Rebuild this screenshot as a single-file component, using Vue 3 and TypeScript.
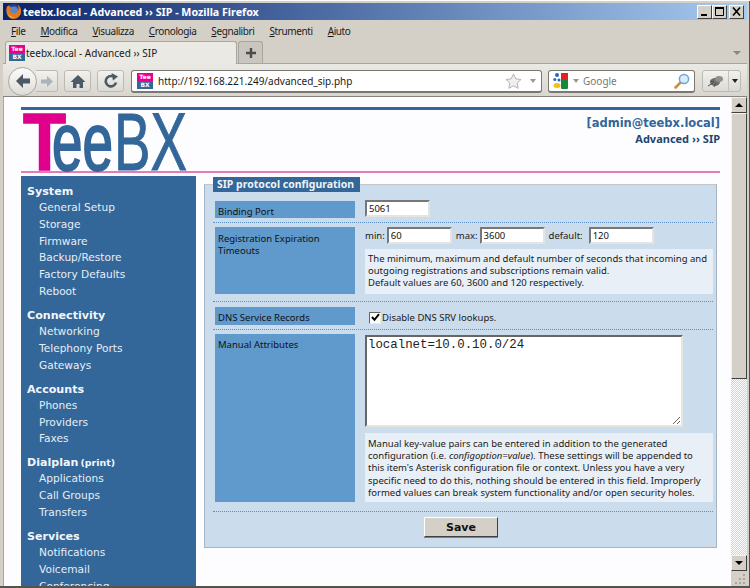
<template>
  <div class="window">
    <div class="titlebar">
      <svg class="ff" width="17" height="17" viewBox="0 0 17 17">
        <circle cx="8.5" cy="8.5" r="7.5" fill="#27408f" />
        <circle cx="9" cy="7.5" r="4" fill="#5a86c8" />
        <path d="M2 3 C1 7 1 13 6 15.5 C10 17 15 14.5 16 9.5 C16.5 6 15 3 12.5 1.5 C14 4 14 6.5 12.5 8.5 C11.5 10.5 8 11.5 6 9.5 C4.5 8 5 6 6.5 5 C5.5 4 4.5 3.5 4 2 C3.5 2.5 3 3 3 3.5 Z" fill="#e8781c" />
        <path d="M3 11 C4 14 7 15.5 10 15 C7.5 14.5 5 13 3 11 Z" fill="#f9c52e" />
      </svg>
      <span class="title-text">teebx.local - Advanced ›› SIP - Mozilla Firefox</span>
      <div class="win-btns">
        <button class="win-btn">
          <svg width="10" height="9" viewBox="0 0 10 9"><rect x="1" y="7" width="6" height="2" fill="#000" /></svg>
        </button>
        <button class="win-btn">
          <svg width="10" height="9" viewBox="0 0 10 9"><path d="M0.5 1.5h8v7h-8z" fill="none" stroke="#000" /><rect x="0" y="0" width="9" height="2" fill="#000" /></svg>
        </button>
        <button class="win-btn close">
          <svg width="10" height="9" viewBox="0 0 10 9"><path d="M1 0.5L8 8.5M8 0.5L1 8.5" stroke="#000" stroke-width="1.6" /></svg>
        </button>
      </div>
    </div>

    <div class="menubar">
      <span v-for="m in menus" :key="m.rest" class="menu-item"><u>{{ m.key }}</u>{{ m.rest }}</span>
    </div>

    <div class="tabstrip">
      <div class="tab">
        <span class="favicon"><b>Tee</b><b>BX</b></span>
        <span class="tab-label">teebx.local - Advanced ›› SIP</span>
      </div>
      <div class="newtab">
        <svg width="14" height="14" viewBox="0 0 14 14"><path d="M7 2v10M2 7h10" stroke="#4c4c4c" stroke-width="2.4" /></svg>
      </div>
      <span class="tab-arrow"></span>
    </div>

    <div class="navbar">
      <div class="back">
        <svg width="18" height="16" viewBox="0 0 18 16"><path d="M9 1L2 8l7 7v-4.5h7v-5H9z" fill="#4c5a68" /></svg>
      </div>
      <div class="forward">
        <svg width="14" height="13" viewBox="0 0 14 13"><path d="M7 1l6 5.500-6 5.500V8.500H1v-4h6z" fill="#a9b4bd" /></svg>
      </div>
      <div class="navbtn home">
        <svg width="16" height="15" viewBox="0 0 16 15"><path d="M8 1L0.500 8h2.500v6h3.500v-4h3v4H13V8h2.500z" fill="#4c5a68" /></svg>
      </div>
      <div class="navbtn reload">
        <svg width="16" height="16" viewBox="0 0 16 16"><path d="M13 9.500A5.200 5.200 0 1 1 10 3.400" fill="none" stroke="#4c5a68" stroke-width="2.600" /><path d="M8.500 0l6.500 3.500-5 4z" fill="#4c5a68" /></svg>
      </div>
      <div class="urlbar">
        <span class="favicon url-fav"><b>Tee</b><b>BX</b></span>
        <span class="url-text">http://192.168.221.249/advanced_sip.php</span>
        <svg width="17" height="16" viewBox="0 0 17 16"><path d="M8.500 1l2.300 4.800 5.200.7-3.800 3.600.9 5.200-4.600-2.500-4.600 2.500.9-5.200L1 6.500l5.200-.7z" fill="#f0efec" stroke="#b3b3b0" /></svg>
        <span class="drop url-drop"></span>
      </div>
      <div class="search">
        <svg width="16" height="16" viewBox="0 0 16 16">
          <rect x="8" y="0" width="7" height="7" fill="#e0231c" />
          <rect x="8" y="6" width="7" height="10" rx="1" fill="#178a3a" />
          <circle cx="4" cy="2" r="2" fill="#2a62c4" />
          <circle cx="1.800" cy="6.500" r="1.500" fill="#2a62c4" />
          <circle cx="6" cy="7" r="1.500" fill="#2a62c4" />
          <ellipse cx="4" cy="12.500" rx="3.500" ry="2.500" fill="#f4c20d" />
        </svg>
        <span class="drop search-drop"></span>
        <span class="search-text">Google</span>
        <svg width="16" height="16" viewBox="0 0 16 16"><path d="M7 9L1.500 14.500" stroke="#d98a35" stroke-width="2.600" stroke-linecap="round" /><circle cx="10" cy="6" r="4.600" fill="#d8ecfa" stroke="#6ea6d8" stroke-width="1.500" /></svg>
      </div>
      <div class="addon">
        <span class="addon-main">
          <svg width="17" height="13" viewBox="0 0 17 13"><ellipse cx="8" cy="7" rx="5" ry="4" fill="#6d6d6d" /><ellipse cx="12" cy="4" rx="4" ry="3" fill="#8f8f8f" /><path d="M1 11l5-3M7 12l2-4M3 6l4 1" stroke="#4f4f4f" /></svg>
        </span>
        <span class="addon-drop"><span class="drop dark"></span></span>
      </div>
    </div>

    <div class="body">
      <div class="page">
        <header class="head">
          <svg class="logo" width="170" height="62" viewBox="0 0 170 62">
            <text x="2" y="60" class="logo-t" textLength="43" lengthAdjust="spacingAndGlyphs">T</text>
            <text x="31" y="60" class="logo-b logo-e" textLength="61" lengthAdjust="spacingAndGlyphs">ee</text>
            <text x="93" y="60" class="logo-b" textLength="73" lengthAdjust="spacingAndGlyphs">BX</text>
          </svg>
          <div class="whoami">
            <div class="user">[admin@teebx.local]</div>
            <div class="crumb">Advanced ›› SIP</div>
          </div>
        </header>

        <div class="main">
          <nav class="sidebar">
            <section v-for="g in nav" :key="g.title" class="group">
              <h3>{{ g.title }}<small v-if="g.note">{{ g.note }}</small></h3>
              <a v-for="item in g.items" :key="item">{{ item }}</a>
            </section>
          </nav>

          <div class="content">
            <fieldset class="panel">
              <legend>SIP protocol configuration</legend>

              <div class="row row-port">
                <div class="lbl lbl-low">Binding Port</div>
                <div class="ctl"><input class="num" value="5061" readonly /></div>
              </div>

              <div class="row row-reg">
                <div class="lbl">Registration Expiration Timeouts</div>
                <div class="ctl">
                  <div class="timeouts">
                    <span>min:</span><input class="num" value="60" readonly />
                    <span>max:</span><input class="num" value="3600" readonly />
                    <span>default:</span><input class="num" value="120" readonly />
                  </div>
                  <p class="help">The minimum, maximum and default number of seconds that incoming and outgoing registrations and subscriptions remain valid.<br />Default values are 60, 3600 and 120 respectively.</p>
                </div>
              </div>

              <div class="row row-dns">
                <div class="lbl lbl-low">DNS Service Records</div>
                <div class="ctl check-line">
                  <span class="check">
                    <svg width="9" height="9" viewBox="0 0 9 9"><path d="M1 4l2.500 2.800L8 1.200" fill="none" stroke="#000" stroke-width="2" /></svg>
                  </span>
                  <span>Disable DNS SRV lookups.</span>
                </div>
              </div>

              <div class="row row-manual">
                <div class="lbl">Manual Attributes</div>
                <div class="ctl">
                  <textarea class="attrs" readonly>localnet=10.0.10.0/24</textarea>
                  <p class="help">Manual key-value pairs can be entered in addition to the generated configuration (i.e. <i>configoption=value</i>). These settings will be appended to this item's Asterisk configuration file or context. Unless you have a very specific need to do this, nothing should be entered in this field. Improperly formed values can break system functionality and/or open security holes.</p>
                </div>
              </div>

              <div class="actions">
                <button class="save">Save</button>
              </div>
            </fieldset>
          </div>
        </div>
      </div>

      <div class="scrollbar">
        <div class="sb-btn"><span class="tri up"></span></div>
        <div class="sb-thumb"></div>
        <div class="sb-track"></div>
        <div class="sb-btn"><span class="tri down"></span></div>
        <div class="sb-grip">
          <svg width="13" height="11" viewBox="0 0 13 11"><path d="M9 1h2v2H9zM5 5h2v2H5zM9 5h2v2H9zM1 9h2v2H1zM5 9h2v2H5zM9 9h2v2H9z" fill="#aaa69c" /></svg>
        </div>
      </div>
    </div>
  </div>
</template>

<script setup lang="ts">
const menus = [
  { key: 'F', rest: 'ile' },
  { key: 'M', rest: 'odifica' },
  { key: 'V', rest: 'isualizza' },
  { key: 'C', rest: 'ronologia' },
  { key: 'S', rest: 'egnalibri' },
  { key: 'S', rest: 'trumenti' },
  { key: 'A', rest: 'iuto' },
];

const nav: { title: string; note?: string; items: string[] }[] = [
  { title: 'System', items: ['General Setup', 'Storage', 'Firmware', 'Backup/Restore', 'Factory Defaults', 'Reboot'] },
  { title: 'Connectivity', items: ['Networking', 'Telephony Ports', 'Gateways'] },
  { title: 'Accounts', items: ['Phones', 'Providers', 'Faxes'] },
  { title: 'Dialplan', note: '(print)', items: ['Applications', 'Call Groups', 'Transfers'] },
  { title: 'Services', items: ['Notifications', 'Voicemail', 'Conferencing'] },
];
</script>

<style>
html, body { margin: 0; overflow: hidden; }
</style>

<style scoped>
* { box-sizing: border-box; }
.window {
  width: 750px;
  height: 588px;
  display: flex;
  flex-direction: column;
  overflow: hidden;
  background: #d4d0c8;
  padding: 3px 3px 0;
  font-family: "Noto Sans", sans-serif;
  color: #1a1a1a;
  border-top: 1px solid #fff;
  box-shadow: inset -1px 0 0 #55534e, inset 0 -2px 0 #55534e;
}
.titlebar {
  height: 17px;
  margin-top: -1px;
  display: flex;
  align-items: center;
  padding: 0 0 0 2px;
  background: linear-gradient(90deg, #0a246a, #a6caf0);
  color: #fff;
  font-size: 10.700px;
  font-weight: bold;
}
.ff { margin-right: 1px; flex: none; }
.title-text { flex: 1; }
.win-btns { display: flex; margin-right: 3px; }
.win-btn {
  width: 15px;
  height: 14px;
  padding: 0;
  background: #d4d0c8;
  border: 1px solid;
  border-color: #fff #404040 #404040 #fff;
  display: flex;
  align-items: center;
  justify-content: center;
}
.win-btn.close { margin-left: 2px; }

.menubar {
  height: 21px;
  display: flex;
  align-items: center;
  font-size: 10px;
  letter-spacing: -0.4px;
  padding-left: 8px;
  gap: 15px;
}

.tabstrip {
  height: 23px;
  display: flex;
  align-items: flex-end;
  padding-left: 2px;
  position: relative;
  border-bottom: 1px solid #a9a69f;
}
.tab {
  width: 232px;
  height: 23px;
  display: flex;
  align-items: center;
  gap: 1px;
  padding-left: 3px;
  background: #ebe9e4;
  border: 1px solid #a9a69f;
  border-bottom: none;
  border-radius: 3px 3px 0 0;
  margin-bottom: -1px;
  font-size: 10px;
}
.favicon {
  width: 16px;
  height: 16px;
  display: flex;
  flex-direction: column;
  flex: none;
  font-family: "DejaVu Sans", sans-serif;
  font-size: 6px;
  line-height: 8px;
  text-align: center;
  color: #fff;
}
.favicon b { display: block; height: 8px; background: #e6008c; }
.favicon b + b { background: #336699; }
.newtab {
  width: 25px;
  height: 22px;
  margin-left: 1px;
  background: #c9c6bf;
  border: 1px solid #a9a69f;
  border-bottom: none;
  border-radius: 3px 3px 0 0;
  display: flex;
  align-items: center;
  justify-content: center;
}
.tab-arrow {
  position: absolute;
  right: 6px;
  top: 10px;
  border: 4px solid transparent;
  border-top: 4px solid #8a8780;
  border-bottom: none;
}

.navbar {
  height: 33px;
  display: flex;
  align-items: center;
  padding: 2px 0 0 5px;
  background: linear-gradient(#ebe9e4, #d9d6cf);
  border-bottom: 1px solid #85837d;
}
.back {
  width: 29px;
  height: 29px;
  flex: none;
  border-radius: 50%;
  background: linear-gradient(#fcfcfb, #dedcd6);
  border: 1px solid #a9a69f;
  display: flex;
  align-items: center;
  justify-content: center;
  position: relative;
  z-index: 1;
}
.forward, .navbtn {
  height: 22px;
  flex: none;
  display: flex;
  align-items: center;
  justify-content: center;
  background: linear-gradient(#f2f1ed, #dcdad4);
  border: 1px solid #bdbab3;
  border-radius: 3px;
}
.forward { width: 22px; margin-left: -1px; border-left: none; border-radius: 0 3px 3px 0; }
.home { width: 27px; margin-left: 6px; }
.reload { width: 27px; margin-left: 6px; }
.urlbar, .search {
  height: 23px;
  flex: none;
  display: flex;
  align-items: center;
  background: #fff;
  border: 1px solid #7a7873;
  border-bottom-width: 2px;
  border-radius: 3px;
}
.urlbar { width: 411px; margin-left: 7px; padding: 0 5px 0 5px; }
.url-fav { margin-right: 5px; }
.url-text { flex: 1; font-size: 10px; }
.drop {
  display: inline-block;
  border: 3.500px solid transparent;
  border-top: 4px solid #9a9892;
  border-bottom: none;
}
.drop.dark { border-top-color: #222; }
.url-drop { margin-left: 8px; }
.search { width: 147px; margin-left: 6px; padding: 0 4px 0 4px; }
.search-drop { margin-left: 4px; }
.search-text { flex: 1; margin-left: 4px; font-size: 10px; color: #777; }
.addon {
  width: 39px;
  height: 22px;
  margin-left: 7px;
  display: flex;
  background: linear-gradient(#f2f1ed, #dcdad4);
  border: 1px solid #bdbab3;
  border-radius: 3px;
}
.addon-main {
  flex: 1;
  display: flex;
  align-items: center;
  justify-content: center;
  border-right: 1px solid #c5c2bb;
}
.addon-drop { width: 11px; display: flex; align-items: center; justify-content: center; }

.body { flex: 1; min-height: 0; display: flex; margin-bottom: 2px; border-left: 1px solid #a9a69f; }
.page {
  width: 727px;
  flex: none;
  background: #fdfdff;
  padding: 10px 11px 0 17px;
  overflow: hidden;
}
.head {
  height: 66px;
  display: flex;
  justify-content: space-between;
  border-top: 3px solid #336699;
  border-bottom: 2px solid #e67ac0;
}
.logo-t {
  font-family: "Liberation Sans", sans-serif;
  font-weight: bold;
  font-size: 82px;
  fill: #e0008c;
  stroke: #e0008c;
  stroke-width: 1.5px;
}
.logo-b {
  font-family: "Liberation Sans", sans-serif;
  font-size: 82px;
  fill: #336699;
  stroke: #336699;
  stroke-width: 1px;
}
.logo-e { stroke-width: 2px; }
.whoami {
  text-align: right;
  font-weight: bold;
  padding-top: 5px;
  line-height: 16px;
}
.user { color: #336699; font-family: "DejaVu Sans", sans-serif; font-size: 11.500px; }
.crumb { color: #23466f; font-size: 11px; }

.main { display: flex; gap: 8px; margin-top: 3px; align-items: flex-start; }
.sidebar {
  width: 175px;
  flex: none;
  height: 420px;
  padding: 8px 6px 0;
  background: #336699;
  color: #e6eef6;
  font-family: "DejaVu Sans", sans-serif;
}
.group { margin-bottom: 8.300px; }
.group h3 {
  margin: 0;
  height: 15px;
  line-height: 16px;
  font-size: 11.100px;
  font-weight: bold;
  color: #f2f6fa;
}
.group small { font-size: 9.500px; margin-left: 2px; }
.group a {
  display: block;
  height: 16.800px;
  line-height: 16.800px;
  padding-left: 12px;
  font-size: 10.600px;
}
.content { width: 513px; flex: none; padding-top: 1px; }
.panel {
  margin: 0;
  padding: 0 3px 11px 8px;
  min-width: 0;
  height: 371px;
  background: #cbdcec;
  border: 1px solid #a4b4c4;
  border-top-color: #c0c6cc;
  font-size: 9.500px;
}
.panel legend {
  margin-left: 0;
  padding: 0 0 0 4px;
  height: 15px;
  width: 147px;
  line-height: 15px;
  white-space: nowrap;
  background: #336699;
  color: #eef3f8;
  font-size: 10.500px;
  font-weight: bold;
}
.row {
  display: flex;
  gap: 10px;
  padding: 4px 0 4px 2px;
  border-bottom: 1px dotted #5b8fc4;
}
.row-port { height: 26px; margin-top: 5px; }
.row-reg { height: 79px; padding-bottom: 7px; }
.row-dns { height: 28px; padding-top: 5px; }
.row-manual { height: 182px; padding-bottom: 9px; }
.lbl {
  width: 140px;
  flex: none;
  padding: 6px 3px 0;
  background: #6099cc;
  color: #111;
  line-height: 12px;
}
.row-manual .lbl { padding-top: 5px; }
.lbl-low { padding-top: 5px; }
.ctl { flex: 1; min-width: 0; }
.num {
  width: 65px;
  height: 17px;
  padding: 0 2px;
  margin: 0 4px 0 2px;
  background: #fff;
  border: 2px solid;
  border-color: #777 #e6e4df #e6e4df #777;
  font-family: "Noto Sans", sans-serif;
  font-size: 9.500px;
  color: #111;
  outline: none;
}
.row-port .num { display: block; margin: -1px 0 0; }
.timeouts { display: flex; align-items: center; height: 17px; }
.timeouts span:last-of-type { margin-right: 4px; }
.help {
  margin: 5px 0 0;
  padding: 4px 3px 0;
  background: #e8eff6;
  line-height: 12.200px;
  font-size: 9.500px;
}
.row-reg .help { height: 45px; }
.row-manual .help { height: 69px; margin-top: 6px; padding-top: 5px; }
.check-line { display: flex; align-items: center; gap: 1px; padding: 3px 0 0 4px; }
.check {
  width: 12px;
  height: 12px;
  flex: none;
  display: flex;
  align-items: center;
  justify-content: center;
  background: #fff;
  border: 1px solid;
  border-color: #666 #eee #eee #666;
}
.attrs {
  display: block;
  width: 318px;
  height: 92px;
  margin-top: 1px;
  padding: 1px;
  background: #fff;
  border: 2px solid;
  border-color: #666 #e6e4df #e6e4df #666;
  font-family: "Liberation Mono", monospace;
  font-size: 12.400px;
  color: #222;
  outline: none;
}
.actions { display: flex; justify-content: center; padding: 5px 4px 0 0; }
.save {
  width: 74px;
  height: 20px;
  padding: 0;
  background: #d4d0c8;
  border: 1px solid;
  border-color: #fff #404040 #404040 #fff;
  box-shadow: 0 1px 0 #808080;
  font-family: "DejaVu Sans", sans-serif;
  font-size: 11px;
  font-weight: bold;
  color: #111;
}

.scrollbar { width: 16px; flex: none; display: flex; flex-direction: column; }
.sb-btn {
  height: 16px;
  flex: none;
  background: #d4d0c8;
  border: 1px solid;
  border-color: #f4f3ef #404040 #404040 #f4f3ef;
  display: flex;
  align-items: center;
  justify-content: center;
}
.tri { border: 4px solid transparent; }
.tri.up { border-bottom: 4px solid #000; border-top: none; }
.tri.down { border-top: 4px solid #000; border-bottom: none; }
.sb-thumb {
  height: 266px;
  flex: none;
  background: #d4d0c8;
  border: 1px solid;
  border-color: #f4f3ef #404040 #404040 #f4f3ef;
}
.sb-track {
  flex: 1;
  background: repeating-conic-gradient(#d4d0c8 0 25%, #fff 0 50%) 0 0 / 2px 2px;
}
.sb-grip { height: 15px; flex: none; display: flex; align-items: flex-start; justify-content: flex-end; padding-top: 2px; }
</style>
